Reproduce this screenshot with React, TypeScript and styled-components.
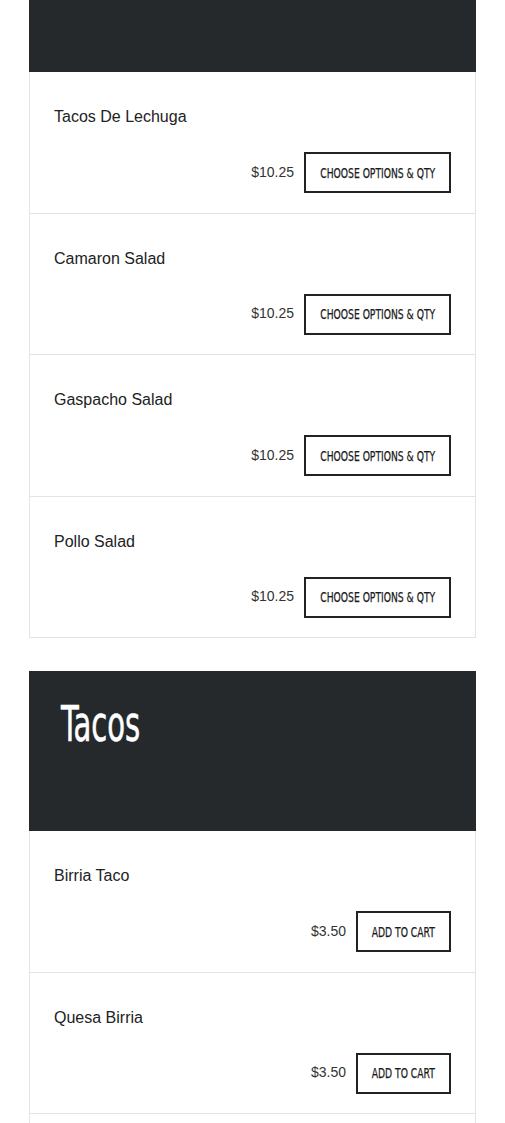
import React from "react";
import styled, { createGlobalStyle } from "styled-components";

const GlobalStyle = createGlobalStyle`
  body {
    margin: 0;
    background: #ffffff;
    font-family: "Liberation Sans", Arial, sans-serif;
    color: #222;
  }
`;

const Page = styled.div`
  padding: 0 29px;
  display: flex;
  flex-direction: column;
  gap: 33px;
`;

const Section = styled.section`
  display: flex;
  flex-direction: column;
`;

const CategoryHeader = styled.header<{ $height: number }>`
  background: #26292c;
  height: ${(p) => p.$height}px;
  padding: 29px 32px 0;
  box-sizing: border-box;
`;

const CategoryTitle = styled.h2`
  margin: 0;
  color: #fff;
  font-family: "DejaVu Sans Condensed", "DejaVu Sans", sans-serif;
  font-weight: 400;
  font-size: 49px;
  line-height: 50px;
  -webkit-text-stroke: 0.6px #fff;
  transform: scaleX(0.66);
  transform-origin: left center;
`;

const ItemList = styled.ul`
  list-style: none;
  margin: 0;
  padding: 0;
  border-left: 1px solid #e3e3e3;
  border-right: 1px solid #e3e3e3;
`;

const Item = styled.li`
  display: flex;
  flex-direction: column;
  gap: 26px;
  padding: 36px 24px 19.5px;
  border-bottom: 1px solid #e3e3e3;
`;

const ItemName = styled.div`
  font-size: 16px;
  line-height: 18px;
  color: #222;
`;

const BuyRow = styled.div`
  display: flex;
  justify-content: flex-end;
  align-items: center;
  gap: 10px;
`;

const Price = styled.span`
  font-size: 14px;
  color: #333;
  margin-top: -2px;
`;

const BuyButton = styled.button<{ $width: number }>`
  width: ${(p) => p.$width}px;
  height: 41px;
  box-sizing: border-box;
  border: 2px solid #222;
  background: #fff;
  color: #1b1b1b;
  padding: 0;
  display: flex;
  align-items: center;
  justify-content: center;
  font-family: "DejaVu Sans Condensed", "DejaVu Sans", sans-serif;
  font-size: 14px;
  text-transform: uppercase;
  cursor: pointer;
`;

const ButtonLabel = styled.span`
  display: inline-block;
  white-space: nowrap;
  -webkit-text-stroke: 0.25px #1b1b1b;
  transform: scaleX(0.73);
`;

type MenuItem = { name: string; price: string; options: boolean };

const salads: MenuItem[] = [
  { name: "Tacos De Lechuga", price: "$10.25", options: true },
  { name: "Camaron Salad", price: "$10.25", options: true },
  { name: "Gaspacho Salad", price: "$10.25", options: true },
  { name: "Pollo Salad", price: "$10.25", options: true },
];

const tacos: MenuItem[] = [
  { name: "Birria Taco", price: "$3.50", options: false },
  { name: "Quesa Birria", price: "$3.50", options: false },
];

function ItemRow({ item }: { item: MenuItem }) {
  return (
    <Item>
      <ItemName>{item.name}</ItemName>
      <BuyRow>
        <Price>{item.price}</Price>
        <BuyButton $width={item.options ? 147 : 95}>
          <ButtonLabel>
            {item.options ? "Choose Options & Qty" : "Add to Cart"}
          </ButtonLabel>
        </BuyButton>
      </BuyRow>
    </Item>
  );
}

export default function App() {
  return (
    <>
      <GlobalStyle />
      <Page>
        <Section>
          <CategoryHeader $height={72} />
          <ItemList>
            {salads.map((item) => (
              <ItemRow key={item.name} item={item} />
            ))}
          </ItemList>
        </Section>
        <Section>
          <CategoryHeader $height={160}>
            <CategoryTitle>Tacos</CategoryTitle>
          </CategoryHeader>
          <ItemList>
            {tacos.map((item) => (
              <ItemRow key={item.name} item={item} />
            ))}
            <Item />
          </ItemList>
        </Section>
      </Page>
    </>
  );
}
